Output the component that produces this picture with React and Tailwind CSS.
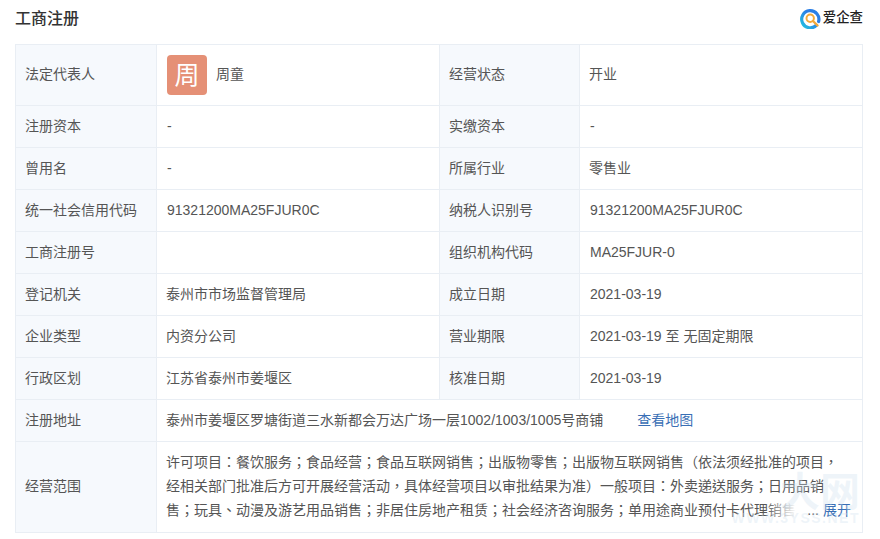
const labelCls = 'border border-[#e9eef4] bg-[#f6f9fd] pl-[9px] text-[14px] text-[#555] font-normal text-left align-middle';
const cellCls = 'border border-[#e9eef4] text-[14px] text-[#555] align-middle';
const valueCls = cellCls + ' pl-[9px]';
const latinCls = cellCls + ' pl-[10px]'; // digits sit 1px further in than the CJK glyphs

const isLatin = (v) => /^[\x00-\x7f]/.test(v);

const rows = [
  ['注册资本', '-', '实缴资本', '-'],
  ['曾用名', '-', '所属行业', '零售业'],
  ['统一社会信用代码', '91321200MA25FJUR0C', '纳税人识别号', '91321200MA25FJUR0C'],
  ['工商注册号', '', '组织机构代码', 'MA25FJUR-0'],
  ['登记机关', '泰州市市场监督管理局', '成立日期', '2021-03-19'],
  ['企业类型', '内资分公司', '营业期限', '2021-03-19 至 无固定期限'],
  ['行政区划', '江苏省泰州市姜堰区', '核准日期', '2021-03-19'],
];

const App = () => {
  return (
    <div className="relative w-[880px] h-[539px] overflow-hidden bg-white font-['Liberation_Sans','Noto_Sans_CJK_SC',sans-serif]">
      {/* header */}
      <div className="flex items-center justify-between h-[44px] pl-[15px] pr-[17px] pb-[6px]">
        <h2 className="text-[16px] font-medium text-[#333]">工商注册</h2>
        <div className="flex items-center mb-[2px]">
          <svg width="21" height="21" viewBox="0 0 21 21" className="mr-[2px]">
            <defs>
              <linearGradient id="ring" x1="1" y1="0" x2="0" y2="1">
                <stop offset="0.4" stopColor="#2b7fe6" />
                <stop offset="1" stopColor="#22c3e0" />
              </linearGradient>
            </defs>
            <path d="M16.5 17.2A8.6 8.6 0 1 1 18.6 13.5" fill="none" stroke="url(#ring)" strokeWidth="3.2" strokeLinecap="round" />
            <circle cx="10.2" cy="10.2" r="3.7" fill="#fff" stroke="#f4a93a" strokeWidth="2" />
            <path d="M13 13l4.5 4.5" stroke="#f4a93a" strokeWidth="2.4" strokeLinecap="round" />
          </svg>
          <span className="text-[13.4px] text-[#222] font-medium">爱企查</span>
        </div>
      </div>

      <div className="pl-[15px] pr-[18px]">
        <table className="w-[847px] table-fixed border-collapse">
          <colgroup>
            <col className="w-[141px]" />
            <col className="w-[283px]" />
            <col className="w-[140px]" />
            <col className="w-[283px]" />
          </colgroup>
          <tbody>
            <tr className="h-[61px]">
              <th className={labelCls + ' pb-[2px]'}>法定代表人</th>
              <td className={latinCls}>
                <div className="flex items-center">
                  <div className="flex items-center justify-center w-[40px] h-[40px] rounded-[4px] bg-[#e59076] text-white text-[25px] leading-none">周</div>
                  <span className="ml-[9px] mb-[2px]">周童</span>
                </div>
              </td>
              <th className={labelCls + ' pb-[2px]'}>经营状态</th>
              <td className={valueCls + ' pb-[2px]'}>开业</td>
            </tr>
            {rows.map((r) => (
              <tr key={r[0]} className="h-[42px]">
                <th className={labelCls}>{r[0]}</th>
                <td className={isLatin(r[1]) ? latinCls : valueCls}>{r[1]}</td>
                <th className={labelCls}>{r[2]}</th>
                <td className={isLatin(r[3]) ? latinCls : valueCls}>{r[3]}</td>
              </tr>
            ))}
            <tr className="h-[42px]">
              <th className={labelCls}>注册地址</th>
              <td className={valueCls} colSpan={3}>
                泰州市姜堰区罗塘街道三水新都会万达广场一层1002/1003/1005号商铺
                <a className="ml-[34px] text-[#3a6fb5]">查看地图</a>
              </td>
            </tr>
            <tr className="h-[91px]">
              <th className={labelCls + ' pb-[2px]'}>经营范围</th>
              <td className={valueCls + ' pb-[2px]'} colSpan={3}>
                <div className="relative leading-[24px] pr-[12px] font-['Liberation_Sans','Noto_Sans_CJK_TC',sans-serif]">
                  <p>许可项目：餐饮服务；食品经营；食品互联网销售；出版物零售；出版物互联网销售（依法须经批准的项目，</p>
                  <p>经相关部门批准后方可开展经营活动，具体经营项目以审批结果为准）一般项目：外卖递送服务；日用品销</p>
                  <p>售；玩具、动漫及游艺用品销售；非居住房地产租赁；社会经济咨询服务；单用途商业预付卡代理销售</p>
                  <span className="absolute right-[11px] bottom-0 flex">
                    <span className="w-[32px] bg-linear-to-r from-transparent to-white" />
                    <span className="bg-white pl-[10px]">
                      ...<a className="ml-[4px] text-[#3a6fb5]">展开</a>
                    </span>
                  </span>
                </div>
              </td>
            </tr>
          </tbody>
        </table>
      </div>

      {/* watermark */}
      <div className="absolute right-[20px] bottom-[14px] flex flex-col items-end pointer-events-none text-[#cfe0ee]/35">
        <span className="text-[40px] leading-[40px] font-bold">大网</span>
        <span className="text-[14px] leading-[13px] font-bold tracking-[1.5px]">WWW.3YSS.NET</span>
      </div>
    </div>
  );
};

export default App;
